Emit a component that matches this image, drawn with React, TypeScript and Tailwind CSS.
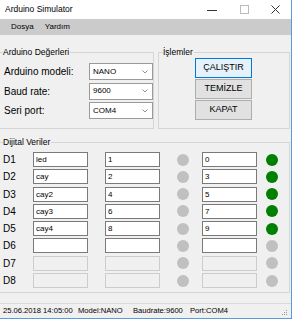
import React from "react";

type Row = { d: string; name: string; a: string; b: string; on: boolean; enabled: boolean };

const rows: Row[] = [
  { d: "D1", name: "led", a: "1", b: "0", on: true, enabled: true },
  { d: "D2", name: "cay", a: "2", b: "3", on: true, enabled: true },
  { d: "D3", name: "cay2", a: "4", b: "5", on: true, enabled: true },
  { d: "D4", name: "cay3", a: "6", b: "7", on: true, enabled: true },
  { d: "D5", name: "cay4", a: "8", b: "9", on: true, enabled: true },
  { d: "D6", name: "", a: "", b: "", on: false, enabled: true },
  { d: "D7", name: "", a: "", b: "", on: false, enabled: false },
  { d: "D8", name: "", a: "", b: "", on: false, enabled: false },
];

const combos = [
  { label: "Arduino modeli:", value: "NANO" },
  { label: "Baud rate:", value: "9600" },
  { label: "Seri port:", value: "COM4" },
];

function TextBox({ value, enabled }: { value: string; enabled: boolean }) {
  return (
    <div
      className={`w-[55px] h-[15px] border pl-[2px] text-[8px] leading-[13px] text-black ${
        enabled ? "border-[#7a7a7a] bg-white" : "border-[#cccccc] bg-[#f0f0f0]"
      }`}
    >
      {value}
    </div>
  );
}

function Led({ on }: { on: boolean }) {
  return <div className={`w-[12px] h-[12px] rounded-full ${on ? "bg-[#008000]" : "bg-[#c0c0c0]"}`} />;
}

export default function App() {
  return (
    <div className="w-[293px] h-[320px] bg-white" style={{ fontFamily: '"Liberation Sans", Arial, sans-serif' }}>
      <div className="w-[292px] h-[319px] flex flex-col bg-[#f0f0f0] border-r border-b border-[#5b9ade]">
        {/* title bar */}
        <div className="h-[19px] bg-white flex items-center">
          <span className="pl-[5px] text-[8.5px] text-black">Arduino Simulator</span>
          <div className="ml-auto flex h-full">
            <div className="w-[32px] flex items-center justify-center">
              <svg width="10" height="10" viewBox="0 0 10 10">
                <line x1="0" y1="5.5" x2="10" y2="5.5" stroke="#333" strokeWidth="1" />
              </svg>
            </div>
            <div className="w-[32px] flex items-center justify-center">
              <svg width="9" height="9" viewBox="0 0 9 9">
                <rect x="0.5" y="0.5" width="8" height="8" fill="none" stroke="#bbbbbb" strokeWidth="1" />
              </svg>
            </div>
            <div className="w-[31px] flex items-center justify-center">
              <svg width="9" height="9" viewBox="0 0 9 9">
                <path d="M0.5 0.5L8.5 8.5M8.5 0.5L0.5 8.5" stroke="#333" strokeWidth="1" />
              </svg>
            </div>
          </div>
        </div>

        {/* menu */}
        <div className="h-[16px] bg-[#cbcbcb] flex items-center pl-[11px] gap-[11px] text-[8px] text-black">
          <span>Dosya</span>
          <span>Yardım</span>
        </div>

        {/* content */}
        <div className="h-[268px] flex flex-col">
          <div className="mt-[11px] flex">
            <fieldset className="w-[154px] h-[83px] border border-l-0 border-[#d5d5d5]">
              <legend className="ml-[3px] pr-[1px] text-[8.5px] leading-[12px] text-black">Arduino Değerleri</legend>
              <div className="mt-[5px] flex flex-col gap-[2.5px]">
                {combos.map((c) => (
                  <div key={c.label} className="flex items-center h-[17px]">
                    <span className="w-[89px] pl-[4px] text-[10px] text-black">{c.label}</span>
                    <div className="w-[64px] h-[17px] border border-[#9a9a9a] bg-white flex items-center pl-[3px] pr-[4px]">
                      <span className="text-[8px] text-black">{c.value}</span>
                      <svg className="ml-auto" width="6" height="4" viewBox="0 0 6 4">
                        <path d="M0.5 0.5L3 3L5.5 0.5" fill="none" stroke="#777" strokeWidth="0.8" />
                      </svg>
                    </div>
                  </div>
                ))}
              </div>
            </fieldset>
            <fieldset className="ml-[4px] w-[132px] h-[83px] border border-[#d5d5d5]">
              <legend className="ml-[4px] pr-[1px] text-[8.5px] leading-[12px] text-black">İşlemler</legend>
              <div className="ml-[36px] flex flex-col gap-[1px] text-[9px] text-black">
                <div className="w-[57px] h-[20px] border border-[#0078d7] bg-[#e5f1fb] flex items-center justify-center">ÇALIŞTIR</div>
                <div className="w-[57px] h-[20px] border border-[#adadad] bg-[#e1e1e1] flex items-center justify-center">TEMİZLE</div>
                <div className="w-[57px] h-[20px] border border-[#adadad] bg-[#e1e1e1] flex items-center justify-center">KAPAT</div>
              </div>
            </fieldset>
          </div>

          <fieldset className="mt-[7px] w-[290px] h-[157px] border border-l-0 border-[#d5d5d5]">
            <legend className="ml-[3px] pr-[1px] text-[8.5px] leading-[12px] text-black">Dijital Veriler</legend>
            <div className="mt-[4px] flex flex-col gap-[2.3px]">
              {rows.map((r) => (
                <div key={r.d} className="flex items-center h-[15px]">
                  <span className="w-[33px] pl-[3px] text-[10px] text-black">{r.d}</span>
                  <TextBox value={r.name} enabled={r.enabled} />
                  <div className="ml-[17px]">
                    <TextBox value={r.a} enabled={r.enabled} />
                  </div>
                  <div className="ml-[17px]">
                    <Led on={false} />
                  </div>
                  <div className="ml-[13px]">
                    <TextBox value={r.b} enabled={r.enabled} />
                  </div>
                  <div className="ml-[9px]">
                    <Led on={r.on} />
                  </div>
                </div>
              ))}
            </div>
          </fieldset>
        </div>

        {/* status bar */}
        <div className="h-[15px] border-t border-[#dadada] flex items-center text-[7.6px] text-black whitespace-nowrap">
          <span className="w-[78px] pl-[3px]">25.06.2018 14:05:00</span>
          <span className="w-[55px]">Model:NANO</span>
          <span className="w-[57px]">Baudrate:9600</span>
          <span>Port:COM4</span>
          <svg className="ml-auto mr-[3px] mt-[4px]" width="6" height="6" viewBox="0 0 6 6">
            <rect x="4" y="0" width="1" height="1" fill="#999" />
            <rect x="2" y="2" width="1" height="1" fill="#999" />
            <rect x="4" y="2" width="1" height="1" fill="#999" />
            <rect x="0" y="4" width="1" height="1" fill="#999" />
            <rect x="2" y="4" width="1" height="1" fill="#999" />
            <rect x="4" y="4" width="1" height="1" fill="#999" />
          </svg>
        </div>
      </div>
    </div>
  );
}
